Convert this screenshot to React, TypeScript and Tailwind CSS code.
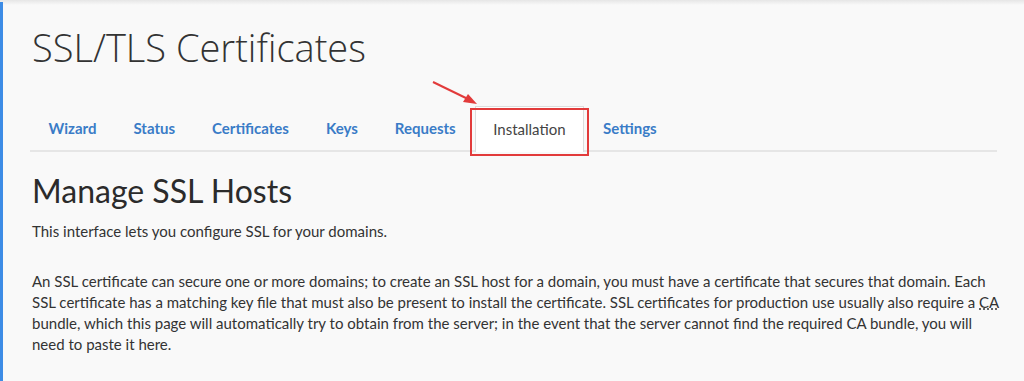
export default function App() {
  const tabs = ["Wizard", "Status", "Certificates", "Keys", "Requests", "Installation", "Settings"];
  const active = "Installation";

  return (
    <div className="relative h-[381px] w-[1024px] overflow-hidden bg-[#f9f9f9] font-['Lato',sans-serif] text-[#333]">
      <div className="absolute left-0 right-0 top-0 h-[5px] bg-gradient-to-b from-[#e6e6e6] to-[#f9f9f9]" />
      <div className="absolute bottom-0 left-0 top-[2px] w-[3px] bg-[#3d8ce6]" />

      <div className="pl-[32px] pr-[27px] pt-[24px]">
        <h1 className="font-['Open_Sans',sans-serif] text-[38px] font-light leading-[46px] text-[#333]">
          SSL/TLS Certificates
        </h1>

        <div className="relative -ml-[2px] mt-[36px] flex h-[46px] border-b-2 border-[#e6e6e6]">
          {tabs.map((t) => (
            <div
              key={t}
              className={
                t === active
                  ? "relative -mb-[2px] ml-[1px] mr-[1px] flex items-center border border-b-0 border-[#ddd] bg-white px-[17px] text-[15px] text-[#444]"
                  : "flex items-center px-[18.5px] text-[15px] font-bold text-[#3a7cc7]"
              }
            >
              {t}
              {t === active && (
                <div className="pointer-events-none absolute -bottom-[4px] -left-[6px] -right-[6px] top-[1px] border-2 border-[#e23b3b]" />
              )}
            </div>
          ))}
          <svg className="pointer-events-none absolute left-[400px] top-[-26px]" width="60" height="30" viewBox="0 0 60 30">
            <line x1="3" y1="2" x2="40" y2="20" stroke="#e23b3b" strokeWidth="2" />
            <polygon points="47,24 33,22 38,14" fill="#e23b3b" />
          </svg>
        </div>

        <h2 className="mt-[20px] text-[32px] leading-[38px] text-[#2b2b2b]">Manage SSL Hosts</h2>
        <p className="mt-[11px] text-[15px] leading-[21px]">This interface lets you configure SSL for your domains.</p>
        <p className="mt-[29px] whitespace-nowrap text-[15px] leading-[21px]">
          An SSL certificate can secure one or more domains; to create an SSL host for a domain, you must have a
          certificate that secures that domain. Each
          <br />
          SSL certificate has a matching key file that must also be present to install the certificate. SSL certificates
          for production use usually also require a{" "}
          <abbr className="underline decoration-dotted" title="Certificate Authority">
            CA
          </abbr>
          <br />
          bundle, which this page will automatically try to obtain from the server; in the event that the server cannot
          find the required CA bundle, you will
          <br />
          need to paste it here.
        </p>
      </div>
    </div>
  );
}
